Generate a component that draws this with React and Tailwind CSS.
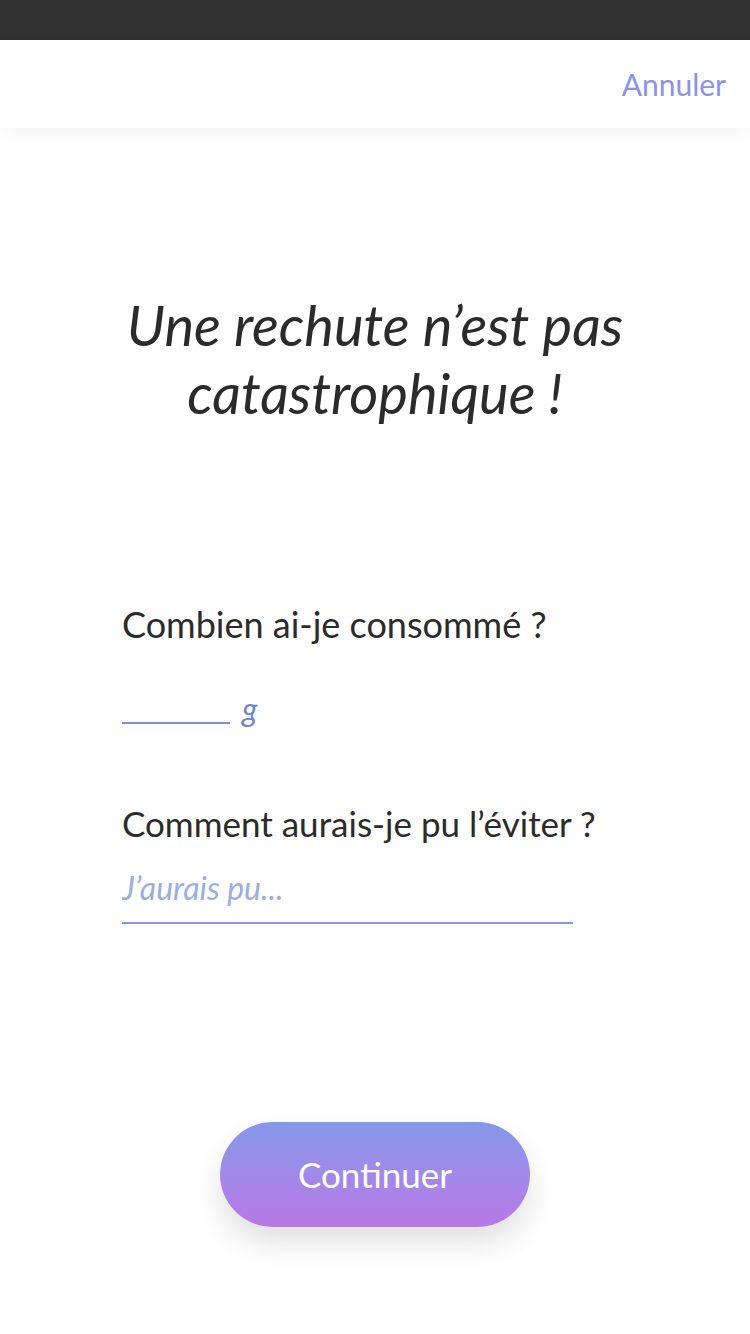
import React, { useState } from "react";

const App = () => {
  const [amount, setAmount] = useState("");
  const [note, setNote] = useState("");

  return (
    <div
      className="w-[750px] h-[1334px] bg-white flex flex-col text-[#2b2b2b]"
      style={{ fontFamily: "Lato, 'Noto Sans', sans-serif" }}
    >
      {/* Status bar */}
      <div className="h-[40px] bg-[#323232] shrink-0"></div>

      {/* Nav bar */}
      <div className="h-[88px] shrink-0 flex items-center justify-end pr-[24px] relative z-10 shadow-[0_6px_18px_rgba(0,0,0,0.04)]">
        <button className="text-[30px] text-[#8a93e6] leading-none">Annuler</button>
      </div>

      {/* Content */}
      <div className="flex-1 flex flex-col">
        <h1 className="mt-[163px] text-center italic text-[56px] leading-[68px] font-normal">
          Une rechute n’est pas
          <br />
          catastrophique !
        </h1>

        <div className="mt-[175px] px-[122px] flex flex-col">
          <label className="text-[36px] leading-[44px]">Combien ai-je consommé ?</label>
          <div className="mt-[38px] flex items-end gap-[12px]">
            <input
              value={amount}
              onChange={(e) => setAmount(e.target.value)}
              className="w-[108px] h-[40px] border-b-2 border-[#7f90d8] outline-none text-[28px] bg-transparent"
            />
            <span className="italic text-[32px] text-[#6f86cc] leading-none -mb-[1px]">g</span>
          </div>

          <label className="mt-[77px] text-[35px] leading-[44px]">Comment aurais-je pu l’éviter ?</label>
          <input
            value={note}
            onChange={(e) => setNote(e.target.value)}
            placeholder="J’aurais pu..."
            className="mt-[23px] w-[451px] border-b-2 border-[#8a96e0] outline-none text-[32px] leading-[40px] italic pb-[14px] bg-transparent placeholder:text-[#9aaedf] placeholder:italic"
          />
        </div>

        <div className="mt-[198px] flex justify-center">
          <button className="w-[310px] h-[105px] rounded-full bg-gradient-to-b from-[#8498ea] to-[#b878e6] text-white text-[35px] shadow-[0_16px_30px_rgba(0,0,0,0.12)]">
            Continuer
          </button>
        </div>
      </div>
    </div>
  );
};

export default App;
